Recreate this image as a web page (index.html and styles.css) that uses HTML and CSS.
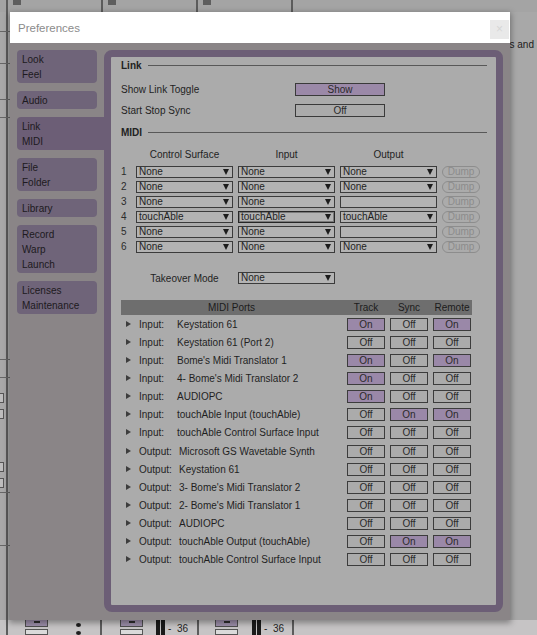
FILE: index.html
```html
<!DOCTYPE html>
<html lang="en">
<head>
    <meta charset="UTF-8">
    <title>Preferences</title>
    <link rel="stylesheet" href="styles.css">
</head>
<body>
    <!-- the Live window behind the dialog -->
    <div class="desk">
        <div class="desk-top">
            <div class="cell-edge"></div>
            <div class="cell"><span class="slot"></span></div>
            <div class="cell"><span class="slot"></span></div>
            <div class="cell"><span class="slot"></span></div>
            <div class="cell cell-rest"></div>
        </div>
        <div class="desk-mid">
            <div class="track-edge">
                <div class="tick t1"></div>
                <div class="tick t2"></div>
                <div class="tick t3"></div>
                <div class="tick t4"></div>
                <div class="tick t5"></div>
                <div class="tick t6"></div>
                <div class="stub s1"></div>
                <div class="stub s2"></div>
                <div class="stub s3"></div>
                <div class="stub s2"></div>
                <div class="tick t7"></div>
                <div class="tick t8"></div>
            </div>
            <div class="desk-text">ies and</div>
        </div>
        <div class="desk-bottom">
            <div class="cell-edge"></div>
            <div class="bseg bseg-1">
                <div class="mini"><span class="mini-btn"><i></i></span><span class="mini-box"></span></div>
                <div class="dots"><span></span><span></span></div>
            </div>
            <div class="bseg bseg-2">
                <div class="mini"><span class="mini-btn"><i></i></span><span class="mini-box"></span></div>
                <div class="meter"><span></span><span></span></div>
                <span class="db">-&nbsp; 36</span>
            </div>
            <div class="bseg bseg-3">
                <div class="mini"><span class="mini-btn"><i></i></span><span class="mini-box"></span></div>
                <div class="meter"><span></span><span></span></div>
                <span class="db">-&nbsp; 36</span>
            </div>
            <div class="bseg bseg-rest"></div>
        </div>
    </div>

    <div class="dialog">
        <div class="titlebar">
            <span class="title">Preferences</span>
            <span class="close">&times;</span>
        </div>
        <div class="dialog-body">
            <nav class="tabs">
                <div class="tab">Look<br>Feel</div>
                <div class="tab">Audio</div>
                <div class="tab active">Link<br>MIDI</div>
                <div class="tab">File<br>Folder</div>
                <div class="tab">Library</div>
                <div class="tab">Record<br>Warp<br>Launch</div>
                <div class="tab">Licenses<br>Maintenance</div>
            </nav>

            <div class="frame">
                <div class="sect sect-link">Link</div>
                <div class="opt-row">
                    <span class="opt-label">Show Link Toggle</span>
                    <span class="toggle on">Show</span>
                </div>
                <div class="opt-row opt-row-2">
                    <span class="opt-label">Start Stop Sync</span>
                    <span class="toggle">Off</span>
                </div>

                <div class="sect sect-midi">MIDI</div>
                <div class="midi-grid col-head">
                    <span></span>
                    <span>Control Surface</span>
                    <span>Input</span>
                    <span>Output</span>
                    <span></span>
                </div>
                <div class="midi-grid surfaces">
                    <span class="num">1</span>
                    <span class="sel">None</span>
                    <span class="sel">None</span>
                    <span class="sel">None</span>
                    <span class="dump">Dump</span>

                    <span class="num">2</span>
                    <span class="sel">None</span>
                    <span class="sel">None</span>
                    <span class="sel">None</span>
                    <span class="dump">Dump</span>

                    <span class="num">3</span>
                    <span class="sel">None</span>
                    <span class="sel">None</span>
                    <span class="sel blank"></span>
                    <span class="dump">Dump</span>

                    <span class="num">4</span>
                    <span class="sel">touchAble</span>
                    <span class="sel focus">touchAble</span>
                    <span class="sel">touchAble</span>
                    <span class="dump">Dump</span>

                    <span class="num">5</span>
                    <span class="sel">None</span>
                    <span class="sel">None</span>
                    <span class="sel blank"></span>
                    <span class="dump">Dump</span>

                    <span class="num">6</span>
                    <span class="sel">None</span>
                    <span class="sel">None</span>
                    <span class="sel">None</span>
                    <span class="dump">Dump</span>
                </div>

                <div class="midi-grid takeover">
                    <span></span>
                    <span class="takeover-label">Takeover Mode</span>
                    <span class="sel">None</span>
                </div>

                <div class="ports">
                    <div class="ports-head">
                        <span>MIDI Ports</span>
                        <span>Track</span>
                        <span>Sync</span>
                        <span>Remote</span>
                    </div>

                    <div class="port">
                        <span class="port-name"><i class="tri"></i><span class="kind">Input:</span>Keystation 61</span>
                        <span class="btn on">On</span><span class="btn">Off</span><span class="btn on">On</span>
                    </div>
                    <div class="port">
                        <span class="port-name"><i class="tri"></i><span class="kind">Input:</span>Keystation 61 (Port 2)</span>
                        <span class="btn">Off</span><span class="btn">Off</span><span class="btn">Off</span>
                    </div>
                    <div class="port">
                        <span class="port-name"><i class="tri"></i><span class="kind">Input:</span>Bome's Midi Translator 1</span>
                        <span class="btn on">On</span><span class="btn">Off</span><span class="btn on">On</span>
                    </div>
                    <div class="port">
                        <span class="port-name"><i class="tri"></i><span class="kind">Input:</span>4- Bome's Midi Translator 2</span>
                        <span class="btn on">On</span><span class="btn">Off</span><span class="btn">Off</span>
                    </div>
                    <div class="port">
                        <span class="port-name"><i class="tri"></i><span class="kind">Input:</span>AUDIOPC</span>
                        <span class="btn on">On</span><span class="btn">Off</span><span class="btn">Off</span>
                    </div>
                    <div class="port">
                        <span class="port-name"><i class="tri"></i><span class="kind">Input:</span>touchAble Input (touchAble)</span>
                        <span class="btn">Off</span><span class="btn on">On</span><span class="btn on">On</span>
                    </div>
                    <div class="port">
                        <span class="port-name"><i class="tri"></i><span class="kind">Input:</span>touchAble Control Surface Input</span>
                        <span class="btn">Off</span><span class="btn">Off</span><span class="btn">Off</span>
                    </div>

                    <div class="port first-out">
                        <span class="port-name"><i class="tri"></i><span class="kind out">Output:</span>Microsoft GS Wavetable Synth</span>
                        <span class="btn">Off</span><span class="btn">Off</span><span class="btn">Off</span>
                    </div>
                    <div class="port">
                        <span class="port-name"><i class="tri"></i><span class="kind out">Output:</span>Keystation 61</span>
                        <span class="btn">Off</span><span class="btn">Off</span><span class="btn">Off</span>
                    </div>
                    <div class="port">
                        <span class="port-name"><i class="tri"></i><span class="kind out">Output:</span>3- Bome's Midi Translator 2</span>
                        <span class="btn">Off</span><span class="btn">Off</span><span class="btn">Off</span>
                    </div>
                    <div class="port">
                        <span class="port-name"><i class="tri"></i><span class="kind out">Output:</span>2- Bome's Midi Translator 1</span>
                        <span class="btn">Off</span><span class="btn">Off</span><span class="btn">Off</span>
                    </div>
                    <div class="port">
                        <span class="port-name"><i class="tri"></i><span class="kind out">Output:</span>AUDIOPC</span>
                        <span class="btn">Off</span><span class="btn">Off</span><span class="btn">Off</span>
                    </div>
                    <div class="port">
                        <span class="port-name"><i class="tri"></i><span class="kind out">Output:</span>touchAble Output (touchAble)</span>
                        <span class="btn">Off</span><span class="btn on">On</span><span class="btn on">On</span>
                    </div>
                    <div class="port">
                        <span class="port-name"><i class="tri"></i><span class="kind out">Output:</span>touchAble Control Surface Input</span>
                        <span class="btn">Off</span><span class="btn">Off</span><span class="btn">Off</span>
                    </div>
                </div>
            </div>
        </div>
    </div>
</body>
</html>
```

FILE: styles.css
```css
* {
    box-sizing: border-box;
}
body {
    margin: 0;
    width: 537px;
    height: 635px;
    overflow: hidden;
    position: relative;
    font-family: "Liberation Sans", Arial, sans-serif;
    font-size: 10px;
    color: #1f1f1f;
    background-color: #a8a8a8;
}

/* background window */
.desk {
    display: flex;
    flex-direction: column;
    height: 635px;
}
.desk-top {
    display: flex;
    height: 12px;
    background-color: #a4a4a4;
}
.cell-edge {
    width: 6px;
}
.cell {
    width: 95px;
    border-left: 2px solid #5c5c5c;
    padding-left: 5px;
}
.cell-rest {
    flex: 1;
}
.slot {
    display: block;
    width: 8px;
    height: 5px;
    background-color: #5e5e5e;
}
.desk-mid {
    flex: 1;
    display: flex;
}
.track-edge {
    width: 10px;
    display: flex;
    flex-direction: column;
    background: linear-gradient(to right, transparent 6px, #5b5b5b 6px, #5b5b5b 8px, transparent 8px);
}
.tick {
    height: 1px;
    background-color: #666;
}
.t1 { margin-top: 19px; }
.t2 { margin-top: 31px; }
.t3 { margin-top: 35px; }
.t4 { margin-top: 17px; }
.t5 { margin-top: 241px; }
.t6 { margin-top: 17px; }
.t7 { margin-top: 4px; }
.t8 { margin-top: 52px; }
.stub {
    width: 4px;
    height: 10px;
    border: 1px solid #555;
    border-left: none;
    background-color: #bdbdbd;
}
.s1 { margin-top: 15px; }
.s2 { margin-top: 6px; }
.s3 { margin-top: 43px; }
.desk-text {
    flex: 1;
    text-align: right;
    padding: 27px 3px 0 0;
    color: #1c1c1c;
}
.desk-bottom {
    display: flex;
    height: 15px;
    overflow: hidden;
    background-color: #c6c4c5;
}
.bseg {
    display: flex;
    border-left: 2px solid #5c5c5c;
}
.bseg-1 { width: 94px; padding-left: 17px; }
.bseg-2 { width: 97px; padding-left: 18px; }
.bseg-3 { width: 95px; padding-left: 16px; }
.bseg-rest { flex: 1; }
.mini {
    display: flex;
    flex-direction: column;
    gap: 2px;
}
.mini-btn {
    display: flex;
    justify-content: center;
    width: 23px;
    height: 9px;
    background-color: #9d8fab;
    border: 1px solid #4e4e4e;
    border-top: none;
}
.mini-btn i {
    width: 6px;
    height: 2px;
    margin-top: 1px;
    background-color: #2d2d2d;
}
.mini-box {
    width: 23px;
    height: 8px;
    border: 1px solid #555;
    background-color: #dadada;
}
.dots {
    display: flex;
    flex-direction: column;
    gap: 4px;
    margin: 3px 0 0 28px;
}
.dots span {
    width: 5px;
    height: 5px;
    border-radius: 50%;
    background-color: #1e1e1e;
}
.meter {
    display: flex;
    gap: 1px;
    margin-left: 13px;
}
.bseg-3 .meter {
    margin-left: 14px;
}
.meter span {
    width: 4px;
    height: 15px;
    background-color: #1a1a1a;
}
.db {
    margin: 3px 0 0 3px;
    line-height: 12px;
    color: #222;
}

/* dialog */
.dialog {
    position: absolute;
    left: 10px;
    top: 12px;
    width: 500px;
    height: 608px;
    display: flex;
    flex-direction: column;
    box-shadow: 0 2px 6px 1px rgba(0, 0, 0, 0.35);
}
.titlebar {
    height: 31px;
    display: flex;
    align-items: center;
    justify-content: space-between;
    padding-left: 8px;
    background-color: #fff;
}
.title {
    font-size: 11.5px;
    color: #8b8b8b;
}
.close {
    align-self: flex-start;
    width: 19px;
    height: 19px;
    margin: 8px 1px 0 0;
    background-color: #e9e9e9;
    color: #d6d6d6;
    font-size: 12px;
    line-height: 19px;
    text-align: center;
}
.dialog-body {
    flex: 1;
    display: flex;
    padding-top: 7px;
    background-color: #8a8587;
}
.tabs {
    width: 94px;
    padding-left: 7px;
    display: flex;
    flex-direction: column;
    gap: 8px;
}
.tab {
    width: 80px;
    padding: 2px 0 1px 5px;
    line-height: 15px;
    color: #1d1a20;
    background-color: #6f6479;
    border-radius: 4px;
}
.tab.active {
    width: 87px;
    border-radius: 4px 0 0 4px;
    background-color: #6c5e76;
}
.frame {
    width: 399px;
    height: 562px;
    padding: 0 9px 0 10px;
    border: 7px solid #6c5e76;
    border-radius: 8px;
    background-color: #ababab;
}

.sect {
    display: flex;
    align-items: center;
    height: 16px;
    font-weight: bold;
    color: #222;
}
.sect::after {
    content: "";
    flex: 1;
    margin-left: 6px;
    border-top: 1px solid #585858;
}
.sect-midi {
    margin-top: 7px;
}
.opt-row {
    display: flex;
    align-items: center;
    height: 13px;
    margin-top: 10px;
}
.opt-row-2 {
    margin-top: 8px;
}
.opt-label {
    width: 174px;
}
.toggle {
    width: 90px;
    height: 13px;
    border: 1px solid #3a3a3a;
    text-align: center;
    line-height: 11px;
    color: #2a2a2a;
}
.toggle.on {
    background-color: #9b89a8;
}

.midi-grid {
    display: grid;
    grid-template-columns: 10px 97px 97px 97px 38px;
    column-gap: 5px;
}
.col-head {
    margin-top: 7px;
    height: 14px;
    align-items: center;
    text-align: center;
}
.surfaces {
    margin-top: 5px;
    row-gap: 3px;
    grid-auto-rows: 12px;
}
.num {
    line-height: 12px;
    color: #2c2c2c;
}
.sel {
    display: flex;
    align-items: center;
    height: 12px;
    padding-left: 2px;
    border: 1px solid #3b3b3b;
    background-color: #b3b3b3;
    line-height: 10px;
}
.sel::after {
    content: "";
    margin: 0 3px 0 auto;
    border-left: 3.5px solid transparent;
    border-right: 3.5px solid transparent;
    border-top: 6px solid #1c1c1c;
}
.sel.blank::after {
    display: none;
}
.sel.focus {
    border-color: #262626;
    box-shadow: inset 0 0 0 1px #7a7a7a;
}
.dump {
    height: 12px;
    border: 1px solid #8d8d8d;
    border-radius: 6px;
    text-align: center;
    line-height: 10px;
    color: #8c8c8c;
}
.takeover {
    margin-top: 19px;
    align-items: center;
}
.takeover-label {
    text-align: center;
}

.ports {
    width: 351px;
    margin-top: 16px;
}
.ports-head,
.port {
    display: grid;
    grid-template-columns: 221px 38px 38px 38px;
    column-gap: 5px;
    align-items: center;
}
.ports-head {
    height: 15px;
    text-align: center;
    background-color: #6e6e6e;
    color: #1c1c1c;
}
.port {
    height: 18px;
}
.port.first-out {
    margin-top: 1px;
}
.port-name {
    display: flex;
    align-items: center;
    padding-left: 5px;
    white-space: nowrap;
}
.tri {
    width: 0;
    height: 0;
    margin-right: 8px;
    border-left: 5px solid #3d3d3d;
    border-top: 3.5px solid transparent;
    border-bottom: 3.5px solid transparent;
}
.kind {
    width: 38px;
}
.kind.out {
    width: 40px;
}
.btn {
    height: 13px;
    border: 1px solid #3c3c3c;
    text-align: center;
    line-height: 11px;
    color: #2a2a2a;
}
.btn.on {
    background-color: #9a88a8;
}
```
